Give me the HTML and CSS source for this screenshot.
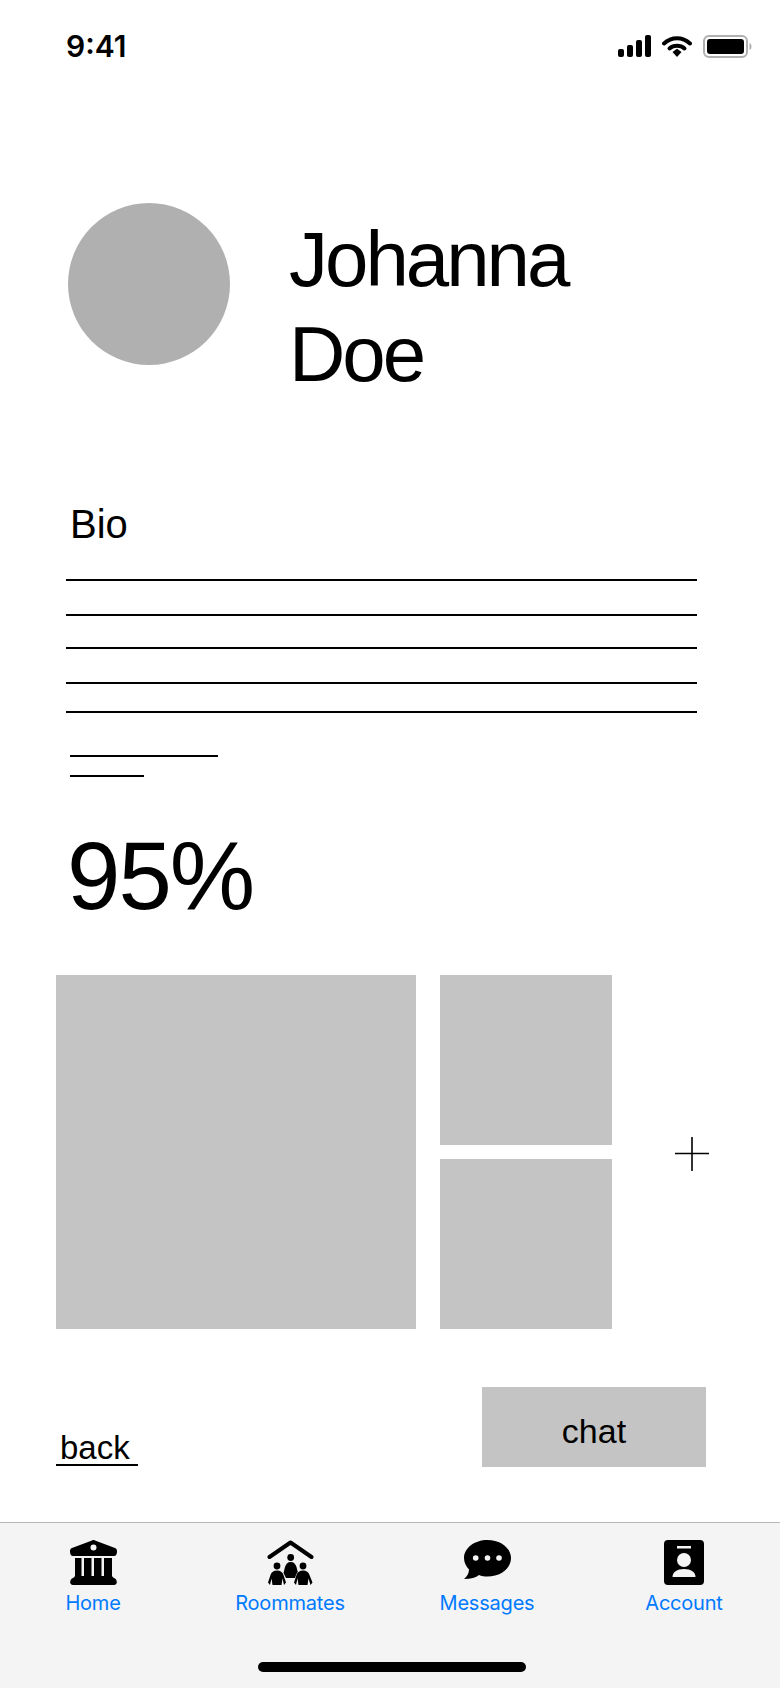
FILE: index.html
```html
<!DOCTYPE html>
<html lang="en">
<head>
    <meta charset="UTF-8">
    <meta name="viewport" content="width=device-width, initial-scale=1.0">
    <title>Johanna Doe</title>
    <link rel="stylesheet" href="styles.css">
</head>
<body>
    <div class="status">
        <span class="time">9:41</span>
        <div class="status-icons">
            <svg class="signal" width="34" height="22" viewBox="0 0 34 22">
                <rect x="0" y="14" width="6" height="8" rx="2"/>
                <rect x="9" y="10" width="6" height="12" rx="2"/>
                <rect x="18" y="5" width="6" height="17" rx="2"/>
                <rect x="27" y="0" width="6" height="22" rx="2"/>
            </svg>
            <svg class="wifi" width="30" height="22" viewBox="0 0 30 22">
                <path d="M2 8.5C9.5 1.5 20.5 1.5 28 8.5" fill="none" stroke="#000" stroke-width="4" stroke-linecap="round"/>
                <path d="M7.5 13.5C11.5 9.8 18.5 9.8 22.5 13.5" fill="none" stroke="#000" stroke-width="4" stroke-linecap="round"/>
                <path d="M10.5 17L15 13.8L19.5 17L15 22Z"/>
            </svg>
            <svg class="battery" width="49" height="23" viewBox="0 0 49 23">
                <rect x="1" y="1" width="43" height="21" rx="5" fill="none" stroke="#b0b0b0" stroke-width="2"/>
                <rect x="4" y="4" width="37" height="15" rx="3"/>
                <path d="M46.5 8C48 8.500 48.500 10 48.500 11.500C48.500 13 48 14.500 46.500 15Z" fill="#b0b0b0"/>
            </svg>
        </div>
    </div>

    <div class="profile">
        <div class="avatar"></div>
        <h1 class="name">Johanna<br>Doe</h1>
    </div>

    <h2 class="bio-title">Bio</h2>
    <div class="bio-lines">
        <div class="line"></div>
        <div class="line gap-33"></div>
        <div class="line gap-31"></div>
        <div class="line gap-33"></div>
        <div class="line gap-27"></div>
        <div class="line short-a"></div>
        <div class="line short-b"></div>
    </div>

    <div class="match">95%</div>

    <div class="gallery">
        <div class="photo photo-big"></div>
        <div class="photo-stack">
            <div class="photo photo-small"></div>
            <div class="photo photo-small"></div>
        </div>
        <svg class="plus" width="34" height="34" viewBox="0 0 34 34">
            <path d="M17 0V34M0 16.500H34" stroke="#000" stroke-width="1.600" fill="none"/>
        </svg>
    </div>

    <div class="actions">
        <a class="back">back</a>
        <button class="chat" type="button">chat</button>
    </div>

    <nav class="tabs">
        <div class="tab-row">
            <div class="tab">
                <svg width="47" height="45" viewBox="0 0 47 45">
                    <path fill-rule="evenodd" d="M22 .4C23 0 24 0 25 .4L45 8C46.500 8.600 47 9.500 47 11.500C47 14 46 16 44 16H3C1 16 0 14 0 11.500C0 9.500 .5 8.600 2 8ZM23.500 4.500A3 3 0 1 0 23.500 10.500A3 3 0 1 0 23.500 4.500Z"/>
                    <rect x="5" y="18" width="6.500" height="19"/>
                    <rect x="14" y="18" width="7.500" height="19"/>
                    <rect x="24" y="18" width="7.500" height="19"/>
                    <rect x="34" y="18" width="8" height="19"/>
                    <path d="M5 36H42C43 38 45 38 46 39.500C47.500 41.500 47 45 44 45H3C0 45 -.5 41.500 1 39.500C2 38 4 38 5 36Z"/>
                </svg>
                <span class="tab-label">Home</span>
            </div>
            <div class="tab">
                <svg width="47" height="45" viewBox="0 0 47 45">
                    <path d="M2.500 17L23.500 2.500L44.500 17" fill="none" stroke="#000" stroke-width="4" stroke-linecap="round" stroke-linejoin="round"/>
                    <circle cx="23.700" cy="17.500" r="3.400"/>
                    <path d="M23.700 22C27 22 28.500 24 29.500 27L31 33L28.500 38H19L16.500 33L18 27C19 24 20.500 22 23.700 22Z"/>
                    <circle cx="10" cy="26" r="3.400"/>
                    <circle cx="36" cy="26" r="3.400"/>
                    <path class="person" d="M10 30.500C13.500 30.500 15.500 32 16.500 35L19 42.500L17 45L15.500 38.500L14.500 45H5.500L4.500 38.500L3 45L1 42.500L3.500 35C4.500 32 6.500 30.500 10 30.500Z"/>
                    <path class="person" d="M36 30.500C39.500 30.500 41.500 32 42.500 35L45.500 42.500L43.500 45L41.500 38.500L40.500 45H31.500L30.500 38.500L29 45L27 42.500L29.500 35C30.500 32 32.500 30.500 36 30.500Z"/>
                </svg>
                <span class="tab-label">Roommates</span>
            </div>
            <div class="tab">
                <svg width="47" height="45" viewBox="0 0 47 45">
                    <path d="M23.500 0C36.500 0 47 8 47 18C47 28.500 36.500 36.500 23.500 36.500C20.500 36.500 17.500 36 15 35C12 37.500 7 39 0 39C3 36.500 5 33.500 5 29.500C2 26.500 0 22.500 0 18C0 8 10.500 0 23.500 0Z"/>
                    <circle cx="11.700" cy="18" r="2.800" fill="#f4f4f4"/>
                    <circle cx="23.500" cy="18" r="2.800" fill="#f4f4f4"/>
                    <circle cx="35" cy="18" r="2.800" fill="#f4f4f4"/>
                </svg>
                <span class="tab-label">Messages</span>
            </div>
            <div class="tab">
                <svg width="40" height="45" viewBox="0 0 40 45">
                    <rect width="40" height="45" rx="4"/>
                    <rect x="13" y="6" width="14" height="2.500" fill="#f4f4f4"/>
                    <circle cx="20" cy="20" r="7" fill="#f4f4f4"/>
                    <path d="M8.500 37C8.500 32 13 29 20 29C27 29 31.500 32 31.500 37Z" fill="#f4f4f4"/>
                </svg>
                <span class="tab-label">Account</span>
            </div>
        </div>
        <div class="home-indicator"></div>
    </nav>
</body>
</html>
```

FILE: styles.css
```css
body {
    margin: 0;
    width: 780px;
    height: 1688px;
    overflow: hidden;
    display: flex;
    flex-direction: column;
    background-color: #fff;
    color: #000;
    font-family: "Liberation Sans", Arial, sans-serif;
}

/* status bar */
.status {
    height: 88px;
    padding: 35px 28px 0 66px;
    box-sizing: border-box;
    display: flex;
    justify-content: space-between;
    align-items: flex-start;
}
.time {
    font-family: Inter, "Liberation Sans", sans-serif;
    font-size: 30px;
    font-weight: 600;
    line-height: 22px;
}
.status-icons {
    display: flex;
    align-items: flex-start;
    gap: 11px;
}
.signal {
    margin-right: -1px;
}

/* name + picture */
.profile {
    display: flex;
    align-items: flex-start;
    gap: 59px;
    margin-top: 115px;
    padding-left: 68px;
}
.avatar {
    width: 162px;
    height: 162px;
    border-radius: 50%;
    background-color: #b0b0b0;
}
.name {
    margin: 9px 0 0;
    font-size: 78px;
    font-weight: 400;
    line-height: 95px;
    letter-spacing: -3px;
}

/* bio */
.bio-title {
    margin: 98px 0 0;
    padding-left: 70px;
    font-size: 40px;
    font-weight: 400;
    line-height: 48px;
}
.bio-lines {
    margin-top: 31px;
    padding-left: 66px;
}
.line {
    width: 631px;
    height: 2px;
    background-color: #000;
}
.gap-33 { margin-top: 33px; }
.gap-31 { margin-top: 31px; }
.gap-27 { margin-top: 27px; }
.short-a {
    width: 148px;
    margin: 42px 0 0 4px;
}
.short-b {
    width: 74px;
    margin: 18px 0 0 4px;
}

.match {
    margin-top: 41px;
    padding-left: 67px;
    font-size: 96px;
    line-height: 116px;
    letter-spacing: -2px;
}

/* photos */
.gallery {
    display: flex;
    align-items: center;
    margin-top: 41px;
    padding-left: 56px;
}
.photo {
    background-color: #c4c4c4;
}
.photo-big {
    width: 360px;
    height: 354px;
}
.photo-stack {
    display: flex;
    flex-direction: column;
    gap: 14px;
    margin-left: 24px;
}
.photo-small {
    width: 172px;
    height: 170px;
}
.plus {
    margin: 4px 0 0 63px;
}

.actions {
    display: flex;
    justify-content: space-between;
    align-items: flex-end;
    margin-top: 58px;
    padding: 0 74px 0 56px;
}
.back {
    width: 82px;
    box-sizing: border-box;
    padding-left: 4px;
    border-bottom: 2px solid #000;
    margin-bottom: 1px;
    font-size: 33px;
    line-height: 32px;
}
.chat {
    width: 224px;
    height: 80px;
    padding: 8px 0 0;
    border: none;
    background-color: #c4c4c4;
    color: #000;
    font-family: inherit;
    font-size: 34px;
}

/* bottom tabs */
.tabs {
    margin-top: auto;
    height: 166px;
    box-sizing: border-box;
    border-top: 1px solid #b8b8b8;
    background-color: #f4f4f4;
    padding-top: 17px;
}
.tab-row {
    display: flex;
    justify-content: space-between;
    padding: 0 21px 0 18px;
}
.tab {
    width: 150px;
    display: flex;
    flex-direction: column;
    align-items: center;
    gap: 6px;
}
.tab-label {
    color: #007aff;
    font-family: Inter, "Liberation Sans", sans-serif;
    font-size: 20px;
    line-height: 24px;
    letter-spacing: -0.2px;
}
.person {
    stroke: #f4f4f4;
    stroke-width: 1;
    paint-order: stroke;
}
.home-indicator {
    width: 268px;
    height: 10px;
    margin: 47px 0 0 258px;
    border-radius: 5px;
    background-color: #000;
}
```
